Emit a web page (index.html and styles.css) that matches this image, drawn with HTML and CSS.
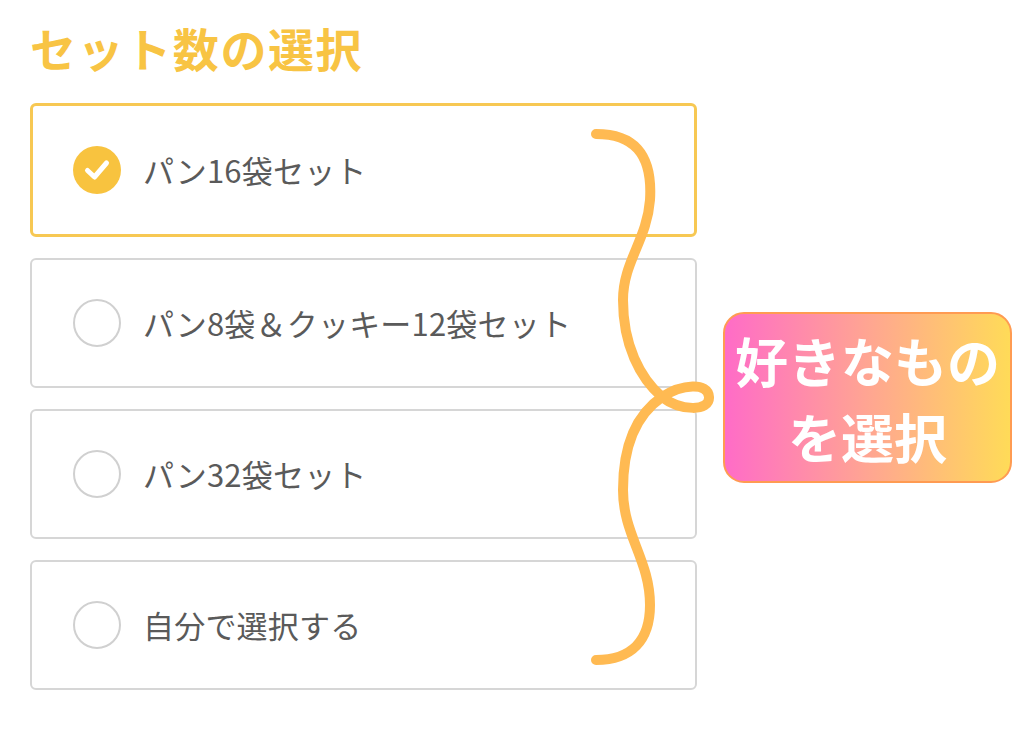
FILE: index.html
```html
<!DOCTYPE html>
<html lang="ja">
<head>
<meta charset="utf-8">
<title>セット数の選択</title>
<link rel="stylesheet" href="styles.css">
</head>
<body>
<main class="page">
  <h1 class="title">セット数の選択</h1>
  <ul class="options">
    <li class="option is-selected">
      <span class="mark">
        <svg viewBox="0 0 48 48" width="48" height="48">
          <circle cx="24" cy="24" r="24" fill="#f8c33f"/>
          <path d="M14.5 24.5 L21.5 31 L33.5 17" fill="none" stroke="#fff" stroke-width="5" stroke-linecap="round" stroke-linejoin="round"/>
        </svg>
      </span>
      <span class="label">パン16袋セット</span>
    </li>
    <li class="option">
      <span class="mark mark-empty"></span>
      <span class="label">パン8袋＆クッキー12袋セット</span>
    </li>
    <li class="option">
      <span class="mark mark-empty"></span>
      <span class="label">パン32袋セット</span>
    </li>
    <li class="option">
      <span class="mark mark-empty"></span>
      <span class="label">自分で選択する</span>
    </li>
  </ul>
  <svg class="brace" viewBox="0 0 1024 736" width="1024" height="736">
    <path d="M596 134 C632 134 653 152 650 200 C647 240 623 262 623 300 C623 345 640 378 662 397 C680 411 710 412 709 397 C708 382 682 384 662 397 C640 412 623 440 623 490 C623 535 650 560 650 605 C650 640 632 660 596 660" fill="none" stroke="#ffba52" stroke-width="10" stroke-linecap="round" stroke-linejoin="round"/>
  </svg>
  <div class="callout">好きなもの<br>を選択</div>
</main>
</body>
</html>
```

FILE: styles.css
```css
html, body {
  margin: 0;
  padding: 0;
  background: #ffffff;
}

.page {
  position: relative;
  width: 1024px;
  height: 736px;
  box-sizing: border-box;
  padding-left: 30px;
  overflow: hidden;
  font-family: "Noto Sans CJK JP", "Noto Sans", sans-serif;
}

.title {
  margin: 19px 0 28px 0;
  font-size: 46px;
  line-height: 56px;
  font-weight: 700;
  color: #f8c444;
  letter-spacing: 1.6px;
}

.options {
  list-style: none;
  margin: 0;
  padding: 0;
  width: 667px;
  display: flex;
  flex-direction: column;
  gap: 21px;
}

.option {
  display: flex;
  align-items: center;
  gap: 22px;
  height: 130px;
  box-sizing: border-box;
  padding-left: 41px;
  border: 2px solid #d6d6d6;
  border-radius: 6px;
  background: #ffffff;
}

.option.is-selected {
  height: 134px;
  padding-left: 40px;
  border: 3px solid #f7c853;
}

.mark {
  flex: none;
  width: 48px;
  height: 48px;
  display: block;
}

.mark svg {
  display: block;
}

.mark-empty {
  box-sizing: border-box;
  border: 2px solid #d0d0d0;
  border-radius: 50%;
}

.label {
  font-size: 31px;
  line-height: 40px;
  color: #5a5a5a;
  font-weight: 400;
  letter-spacing: 0.2px;
}

.brace {
  position: absolute;
  left: 0;
  top: 0;
  pointer-events: none;
}

.callout {
  position: absolute;
  left: 723px;
  top: 312px;
  width: 289px;
  height: 171px;
  box-sizing: border-box;
  border: 2px solid #ff9b52;
  border-radius: 21px;
  background: linear-gradient(90deg, #ff6cc7 0%, #ffa592 50%, #ffdb58 100%);
  display: flex;
  align-items: center;
  justify-content: center;
  text-align: center;
  color: #ffffff;
  font-size: 53px;
  line-height: 76px;
  font-weight: 700;
}
```
